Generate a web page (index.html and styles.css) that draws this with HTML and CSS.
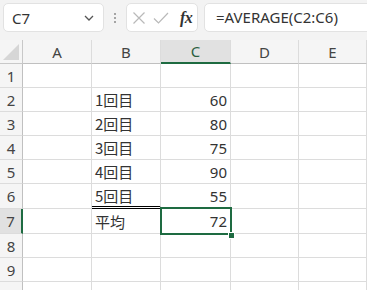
FILE: index.html
```html
<!DOCTYPE html>
<html lang="ja">
<head>
<meta charset="utf-8">
<link rel="stylesheet" href="styles.css">
</head>
<body>
<div class="app">
  <div class="toolbar">
    <div class="namebox">
      <span class="name">C7</span>
      <svg class="chev" width="10" height="6" viewBox="0 0 10 6"><path d="M1 1 L5 5 L9 1" fill="none" stroke="#555" stroke-width="1.3"/></svg>
    </div>
    <div class="dots"><span></span><span></span><span></span></div>
    <div class="iconbox">
      <svg width="14" height="14" viewBox="0 0 14 14"><path d="M1.5 1.5 L12.5 12.5 M12.5 1.5 L1.5 12.5" stroke="#b9b9b9" stroke-width="1.2"/></svg>
      <svg width="16" height="14" viewBox="0 0 16 14"><path d="M1 7.5 L5.5 12 L15 2" fill="none" stroke="#b9b9b9" stroke-width="1.2"/></svg>
      <span class="fx">fx</span>
    </div>
    <div class="formula">=AVERAGE(C2:C6)</div>
  </div>
  <div class="sheet">
    <div class="corner"><svg width="16" height="16" viewBox="0 0 16 16"><path d="M16 0 L16 16 L0 16 Z" fill="#d6d6d6"/></svg></div>
    <div class="ch">A</div><div class="ch">B</div><div class="ch sel">C</div><div class="ch">D</div><div class="ch">E</div>

    <div class="rh">1</div><div class="c"></div><div class="c"></div><div class="c"></div><div class="c"></div><div class="c"></div>
    <div class="rh">2</div><div class="c"></div><div class="c">1回目</div><div class="c num">60</div><div class="c"></div><div class="c"></div>
    <div class="rh">3</div><div class="c"></div><div class="c">2回目</div><div class="c num">80</div><div class="c"></div><div class="c"></div>
    <div class="rh">4</div><div class="c"></div><div class="c">3回目</div><div class="c num">75</div><div class="c"></div><div class="c"></div>
    <div class="rh">5</div><div class="c"></div><div class="c">4回目</div><div class="c num">90</div><div class="c"></div><div class="c"></div>
    <div class="rh">6</div><div class="c"></div><div class="c dbl">5回目</div><div class="c num">55</div><div class="c"></div><div class="c"></div>
    <div class="rh selr">7</div><div class="c"></div><div class="c">平均</div><div class="c num">72</div><div class="c"></div><div class="c"></div>
    <div class="rh">8</div><div class="c"></div><div class="c"></div><div class="c"></div><div class="c"></div><div class="c"></div>
    <div class="rh">9</div><div class="c"></div><div class="c"></div><div class="c"></div><div class="c"></div><div class="c"></div>
    <div class="rh">10</div><div class="c"></div><div class="c"></div><div class="c"></div><div class="c"></div><div class="c"></div>

    <div class="selbox"></div>
    <div class="handle"></div>
  </div>
</div>
</body>
</html>
```

FILE: styles.css
```css
* { box-sizing: border-box; }
html, body { margin: 0; padding: 0; background: #fff; }
body { width: 367px; height: 290px; overflow: hidden; font-family: "Noto Sans CJK JP", "Noto Sans", sans-serif; color: #333; }
.app { width: 367px; height: 290px; overflow: hidden; }

.toolbar {
  height: 40px;
  background: #f3f3f3;
  display: flex;
  align-items: flex-start;
  padding: 3px 0 0 3px;
  width: 420px;
}
.namebox {
  width: 101px; height: 29px;
  background: #fff;
  border: 1px solid #e2e2e2;
  border-radius: 5px;
  display: flex; align-items: center; justify-content: space-between;
  padding: 0 9px 0 8px;
}
.name { font-family: "Noto Sans", sans-serif; font-size: 15px; color: #333; }
.dots {
  width: 22px; height: 29px;
  display: flex; flex-direction: column; align-items: center; justify-content: center; gap: 2px;
}
.dots span { width: 2px; height: 2px; background: #8a8a8a; border-radius: 1px; }
.iconbox {
  width: 72px; height: 29px;
  background: #fff;
  border: 1px solid #e2e2e2;
  border-radius: 5px;
  display: flex; align-items: center;
  padding: 0 0 0 5px; gap: 7px;
}
.fx { font-family: "Liberation Serif", serif; font-style: italic; font-weight: bold; font-size: 16px; color: #333; margin-left: 4px; letter-spacing: -0.5px; }
.formula {
  margin-left: 6px;
  flex: 1;
  height: 29px;
  background: #fff;
  border: 1px solid #e2e2e2;
  border-radius: 5px;
  font-family: "Noto Sans", sans-serif; font-size: 15px; color: #333;
  padding: 0 0 0 11px;
  line-height: 26px;
}

.sheet {
  position: relative;
  display: grid;
  grid-template-columns: 23px 69px 69px 70px 68px 68px;
  grid-template-rows: 24px 24px 24px 24px 24px 24px 25px 25px 24px 24px 24px;
}
.corner {
  background: #f5f5f5;
  border-right: 1px solid #c8c8c8;
  border-bottom: 1px solid #c8c8c8;
  display: flex; align-items: flex-end; justify-content: flex-end;
  padding: 0 3px 3px 0;
}
.ch {
  background: #f5f5f5;
  border-right: 1px solid #dcdcdc;
  border-bottom: 1px solid #c0c0c0;
  font-family: "Noto Sans", sans-serif; font-size: 15px; color: #444;
  display: flex; align-items: center; justify-content: center;
}
.ch.sel { background: #e1e1e1; border-bottom: 2px solid #1e6b41; color: #2b5e3f; }
.rh {
  background: #f5f5f5;
  border-right: 1px solid #c0c0c0;
  border-bottom: 1px solid #dcdcdc;
  font-family: "Noto Sans", sans-serif; font-size: 15px; color: #444;
  display: flex; align-items: center; justify-content: center;
}
.rh.selr { background: #e1e1e1; border-right: 2px solid #1e6b41; color: #444; }
.c {
  border-right: 1px solid #dcdcdc;
  border-bottom: 1px solid #dcdcdc;
  font-size: 15px; color: #333;
  display: flex; align-items: center;
  padding: 0 3px 0 3px;
  white-space: nowrap;
}
.c.num { justify-content: flex-end; font-family: "Noto Sans", sans-serif; }
.c.dbl { border-bottom: 3px double #000; }

.selbox {
  position: absolute;
  left: 160px; top: 167px;
  width: 72px; height: 28px;
  border: 2px solid #1e6b41;
  pointer-events: none;
}
.handle {
  position: absolute;
  left: 228px; top: 192px;
  width: 7px; height: 7px;
  background: #1e6b41;
  border: 1px solid #fff;
}
```
